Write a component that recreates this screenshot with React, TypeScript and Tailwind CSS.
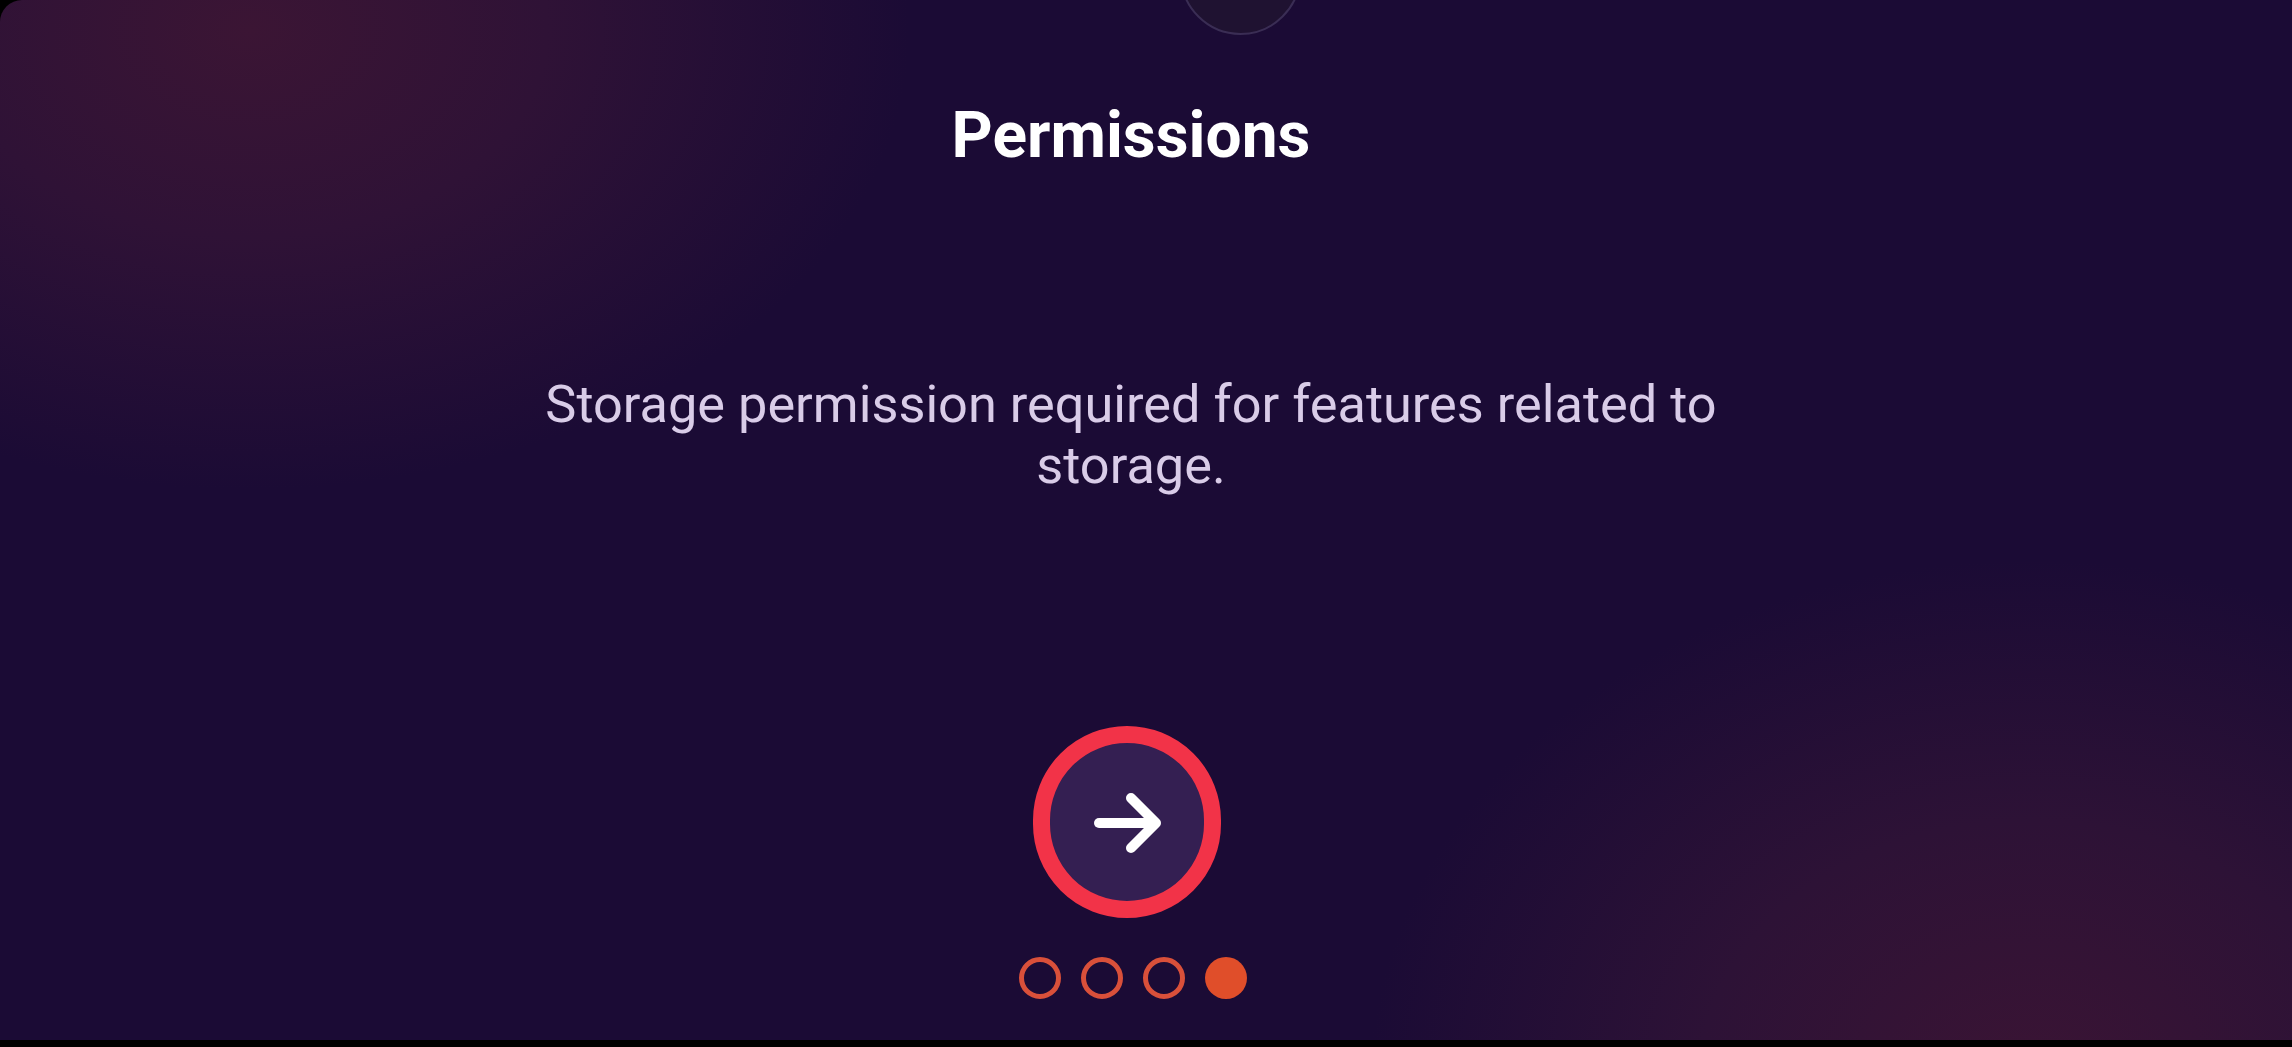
import React from "react";

export default function App() {
  return (
    <div className="w-full h-[1047px] bg-black overflow-hidden" style={{ fontFamily: "Roboto, 'Noto Sans', sans-serif" }}>
      <div className="relative w-full h-[1040px] rounded-tl-[22px] overflow-hidden bg-[#1b0b35] bg-[radial-gradient(ellipse_660px_460px_at_250px_30px,#3b1534_0%,#2f1236_45%,transparent_100%),radial-gradient(ellipse_660px_520px_at_2030px_1080px,#3a1434_0%,#2d1236_50%,transparent_100%)]">
        <div className="absolute left-[1180px] top-[-86px] w-[121px] h-[121px] rounded-full bg-[#1f1231] border-2 border-[#3a2d54]" />
        <div className="flex flex-col items-center pr-[30px]">
          <h1 className="mt-[98px] text-[64px] leading-[76px] font-bold text-white">Permissions</h1>
          <p className="mt-[200px] w-[1240px] text-center text-[52.3px] leading-[61px] text-[#d9cce8]">
            Storage permission required for features related to storage.
          </p>
          <button className="mt-[230px] mr-[8px] w-[188px] h-[192px] rounded-full border-[17px] border-[#f23348] bg-[#341f52] flex items-center justify-center">
            <svg width="80" height="70" viewBox="0 0 80 70" fill="none" stroke="#ffffff" strokeWidth="10" strokeLinecap="round" strokeLinejoin="round">
              <path d="M12 36 H67" />
              <path d="M44 11 L69 36 L44 61" />
            </svg>
          </button>
          <div className="mt-[39px] flex gap-[20px] pl-[4px]">
            <div className="w-[42px] h-[42px] rounded-full border-[5px] border-[#d9503a]" />
            <div className="w-[42px] h-[42px] rounded-full border-[5px] border-[#d9503a]" />
            <div className="w-[42px] h-[42px] rounded-full border-[5px] border-[#d9503a]" />
            <div className="w-[42px] h-[42px] rounded-full bg-[#e04e2a]" />
          </div>
        </div>
      </div>
    </div>
  );
}
